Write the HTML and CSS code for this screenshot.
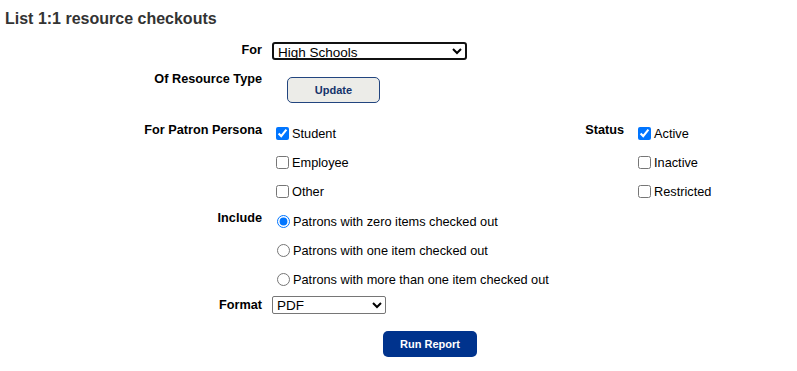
FILE: index.html
```html
<!DOCTYPE html>
<html>
<head>
<meta charset="utf-8">
<link rel="stylesheet" href="styles.css">
</head>
<body>
<h1 class="title">List 1:1 resource checkouts</h1>
<form class="form">
  <div class="row row-for">
    <div class="label">For</div>
    <div class="content">
      <select class="select select-for">
        <option>High Schools</option>
      </select>
    </div>
  </div>
  <div class="row row-type">
    <div class="label">Of Resource Type</div>
    <div class="content">
      <button type="button" class="btn-update">Update</button>
    </div>
  </div>
  <div class="row row-persona">
    <div class="label label-opt">For Patron Persona</div>
    <div class="content persona">
      <div class="opt-list persona-list">
        <label class="opt"><input type="checkbox" checked>Student</label>
        <label class="opt"><input type="checkbox">Employee</label>
        <label class="opt"><input type="checkbox">Other</label>
      </div>
      <div class="label label-opt status-label">Status</div>
      <div class="opt-list">
        <label class="opt"><input type="checkbox" checked>Active</label>
        <label class="opt"><input type="checkbox">Inactive</label>
        <label class="opt"><input type="checkbox">Restricted</label>
      </div>
    </div>
  </div>
  <div class="row row-include">
    <div class="label label-opt">Include</div>
    <div class="content opt-list">
      <label class="opt"><input type="radio" name="inc" checked>Patrons with zero items checked out</label>
      <label class="opt"><input type="radio" name="inc">Patrons with one item checked out</label>
      <label class="opt"><input type="radio" name="inc">Patrons with more than one item checked out</label>
    </div>
  </div>
  <div class="row row-format">
    <div class="label">Format</div>
    <div class="content">
      <select class="select select-format">
        <option>PDF</option>
      </select>
    </div>
  </div>
  <div class="row row-run">
    <button type="button" class="btn-run">Run Report</button>
  </div>
</form>
</body>
</html>
```
FILE: styles.css
```css
html, body {
  margin: 0;
  padding: 0;
  background: #fff;
}
body {
  font-family: "Liberation Sans", Arial, sans-serif;
  color: #000;
}
.title {
  margin: 0;
  padding: 9px 0 0 5px;
  font-size: 16px;
  line-height: 19px;
  font-weight: bold;
  color: #333;
}
.form {
  display: flex;
  flex-direction: column;
}
.row {
  display: flex;
  align-items: flex-start;
}
.label {
  width: 262px;
  flex: none;
  text-align: right;
  font-weight: bold;
  font-size: 12.7px;
  line-height: 16px;
  color: #000;
}
.content {
  margin-left: 10px;
}
.row-for {
  margin-top: 14px;
}
.row-for .label {
  padding-top: 0;
}
.select {
  font-family: "Liberation Sans", Arial, sans-serif;
  font-size: 13.5px;
  height: 18px;
  line-height: 14px;
  padding: 0;
  margin: 0;
  background: #fff;
  color: #000;
  box-sizing: border-box;
}
.select-for {
  width: 195px;
  border: 2px solid #111;
  border-radius: 3px;
}
.select-format {
  width: 114px;
  border: 1px solid #767676;
  border-radius: 2px;
}
.row-type {
  margin-top: 10px;
}
.row-type .label {
  padding-top: 0;
}
.btn-update {
  margin: 6px 0 0 15px;
  width: 93px;
  height: 26px;
  background: #ecece8;
  border: 1px solid #22457f;
  border-radius: 5px;
  color: #15336b;
  font-family: "Liberation Sans", Arial, sans-serif;
  font-weight: bold;
  font-size: 11px;
  padding: 0;
}
.row-persona {
  margin-top: 16px;
}
.label-opt {
  padding-top: 3px;
}
.persona {
  display: flex;
  align-items: flex-start;
}
.persona-list {
  width: 305px;
}
.status-label {
  width: 47px;
  margin-right: 10px;
}
.opt-list {
  display: flex;
  flex-direction: column;
}
.opt {
  display: flex;
  align-items: center;
  height: 29px;
  font-size: 12.75px;
  color: #000;
}
.opt input[type="checkbox"] {
  margin: 0 3px 0 4px;
  width: 13px;
  height: 13px;
}
.opt input[type="radio"] {
  margin: 0 3px 0 5px;
  width: 13px;
  height: 13px;
}
.row-include {
  margin-top: 1px;
}
.row-include .label {
  padding-top: 3px;
}
.row-format {
  margin-top: 2px;
}
.row-format .label {
  padding-top: 1px;
}
.row-run {
  margin-top: 17px;
  padding-left: 383px;
}
.btn-run {
  width: 94px;
  height: 26px;
  background: #00338d;
  border: none;
  border-radius: 5px;
  color: #fff;
  font-family: "Liberation Sans", Arial, sans-serif;
  font-weight: bold;
  font-size: 11px;
  padding: 0;
}
```
